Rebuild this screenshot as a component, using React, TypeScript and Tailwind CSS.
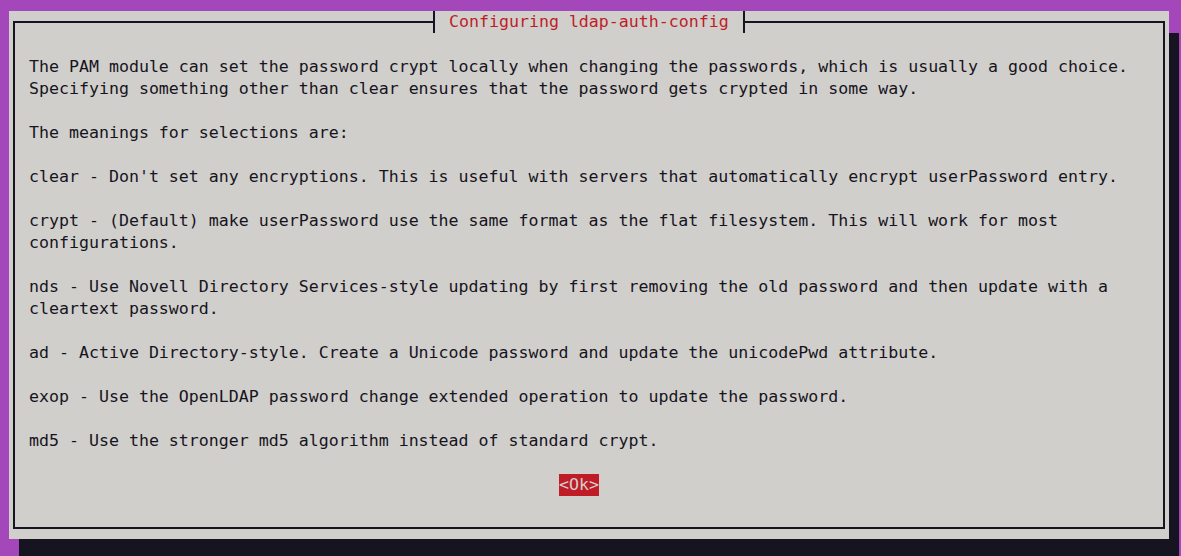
import React from 'react';

const LINES: string[] = [
  '',
  '',
  'The PAM module can set the password crypt locally when changing the passwords, which is usually a good choice.',
  'Specifying something other than clear ensures that the password gets crypted in some way.',
  '',
  'The meanings for selections are:',
  '',
  "clear - Don't set any encryptions. This is useful with servers that automatically encrypt userPassword entry.",
  '',
  'crypt - (Default) make userPassword use the same format as the flat filesystem. This will work for most',
  'configurations.',
  '',
  'nds - Use Novell Directory Services-style updating by first removing the old password and then update with a',
  'cleartext password.',
  '',
  'ad - Active Directory-style. Create a Unicode password and update the unicodePwd attribute.',
  '',
  'exop - Use the OpenLDAP password change extended operation to update the password.',
  '',
  'md5 - Use the stronger md5 algorithm instead of standard crypt.',
  '',
];

const App: React.FC = () => {
  return (
    <div
      className="w-[1181px] h-[556px] overflow-hidden bg-[#A347BA] pl-[9px] pt-[11px] text-[#171421] text-[16.6px] leading-[22px]"
      style={{ fontFamily: '"DejaVu Sans Mono", "Liberation Mono", monospace' }}
    >
      {/* dialog with terminal shadow */}
      <div className="w-[1160px] h-[528px] bg-[#D0CFCC] shadow-[10px_22px_0_#171421] pt-[10px] pl-[4px]">
        <div className="relative w-[1152px] h-[508px] border-2 border-[#171421]">
          {/* title */}
          <div className="absolute left-[418px] top-[-12px] h-[22px] flex items-center bg-[#D0CFCC] border-l-2 border-r-2 border-[#171421] px-[14px] text-[#C01C28] whitespace-pre">
            Configuring ldap-auth-config
          </div>

          {/* body */}
          <div className="pl-[14px] mt-[-11px]">
            {LINES.map((l, i) => (
              <div key={i} className="h-[22px] whitespace-pre">
                {l}
              </div>
            ))}
            <div className="h-[22px] flex">
              <span className="ml-[530px] bg-[#C01C28] text-[#D0CFCC] whitespace-pre">{'<Ok>'}</span>
            </div>
          </div>
        </div>
      </div>
    </div>
  );
};

export default App;
